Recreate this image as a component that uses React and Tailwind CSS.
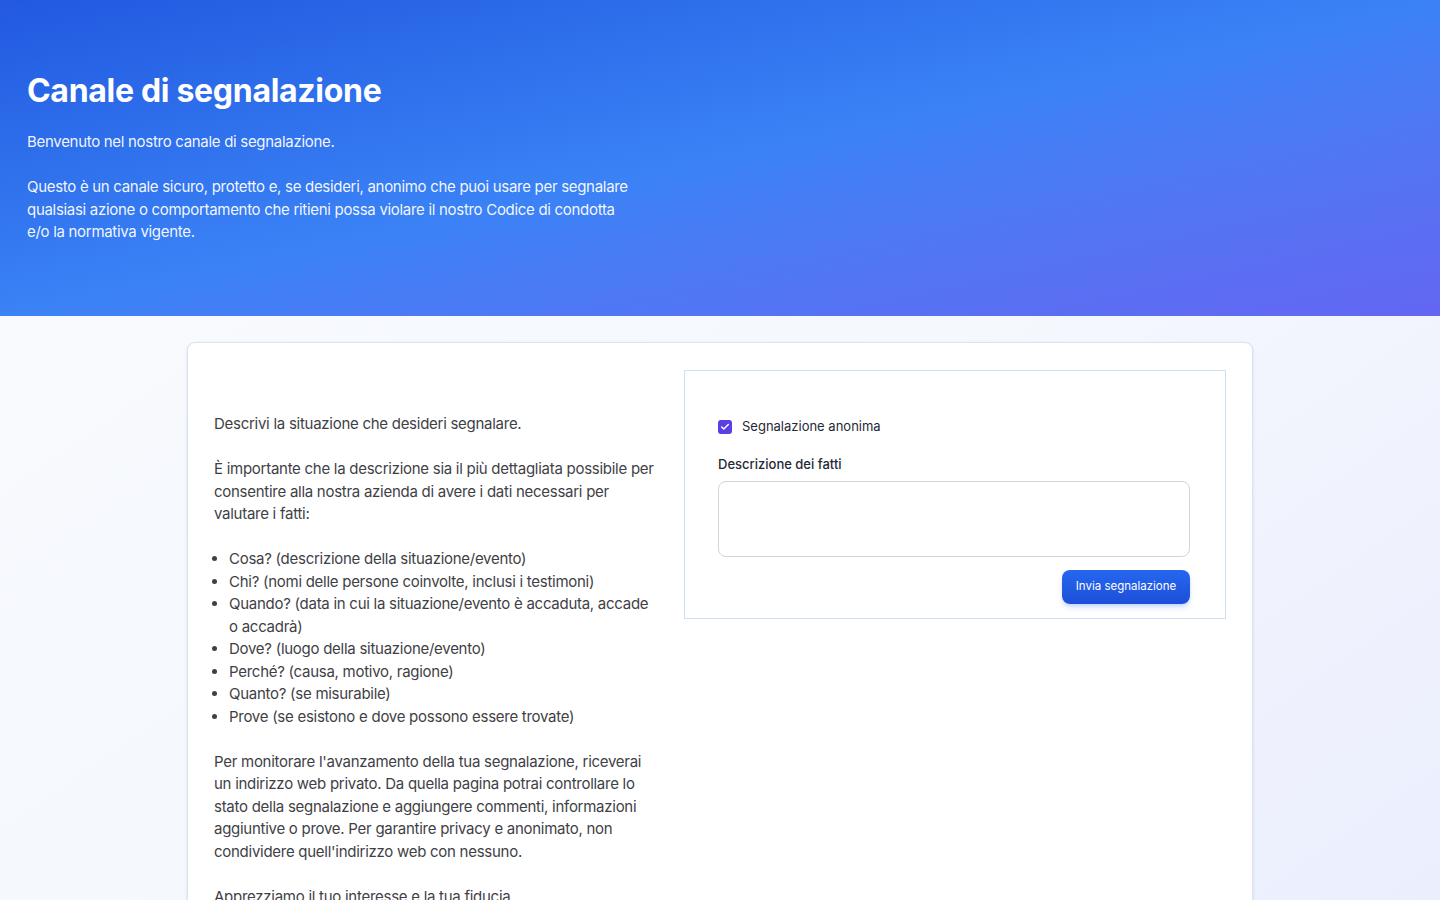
import { Check } from 'lucide-react';

const DOMANDE = [
  'Cosa? (descrizione della situazione/evento)',
  'Chi? (nomi delle persone coinvolte, inclusi i testimoni)',
  'Quando? (data in cui la situazione/evento è accaduta, accade o accadrà)',
  'Dove? (luogo della situazione/evento)',
  'Perché? (causa, motivo, ragione)',
  'Quanto? (se misurabile)',
  'Prove (se esistono e dove possono essere trovate)',
];

export default function App() {
  return (
    <div
      className="min-h-screen bg-gradient-to-br from-[#f9fbfe] via-[#f5f8fd] to-[#eaedfd] text-[#3f3f46]"
      style={{ fontFamily: 'Inter, "Noto Sans", sans-serif' }}
    >
      <header className="h-[316px] bg-gradient-to-br from-[#2259e0] via-[#3b82f6] to-[#6366f1] px-[27px] pt-[71px] text-white">
        <h1 className="text-[32px] font-bold leading-[40px] tracking-[-0.3px]">Canale di segnalazione</h1>
        <div className="mt-[20px] max-w-[612px] text-[15px] leading-[22.5px] tracking-[-0.3px] text-white/95">
          <p>Benvenuto nel nostro canale di segnalazione.</p>
          <p className="mt-[22.5px]">
            Questo è un canale sicuro, protetto e, se desideri, anonimo che puoi usare per segnalare qualsiasi azione o
            comportamento che ritieni possa violare il nostro Codice di condotta e/o la normativa vigente.
          </p>
        </div>
      </header>

      <main className="px-[187px] pt-[26px] pb-16">
        <section className="flex gap-6 rounded-lg border border-[#d6e4f5] bg-white px-[26px] pt-[27px] pb-[27px] shadow-sm">
          <div className="w-[446px] shrink-0 pt-[43px] text-[15px] leading-[22.5px] tracking-[-0.27px] text-[#3f3f46]">
            <p>Descrivi la situazione che desideri segnalare.</p>
            <p className="mt-[22.5px]">
              È importante che la descrizione sia il più dettagliata possibile per consentire alla nostra azienda di
              avere i dati necessari per valutare i fatti:
            </p>
            <ul className="mt-[22.5px] list-disc pl-[15px]">
              {DOMANDE.map((d) => (
                <li key={d}>{d}</li>
              ))}
            </ul>
            <p className="mt-[22.5px]">
              Per monitorare l'avanzamento della tua segnalazione, riceverai un indirizzo web privato. Da quella
              pagina potrai controllare lo stato della segnalazione e aggiungere commenti, informazioni aggiuntive o
              prove. Per garantire privacy e anonimato, non condividere quell'indirizzo web con nessuno.
            </p>
            <p className="mt-[22.5px]">Apprezziamo il tuo interesse e la tua fiducia.</p>
          </div>

          <div className="flex-1 self-start">
            <div className="border border-[#cfe0f3] pl-[33px] pr-[35px] pt-[46px] pb-[14px]">
              <label className="flex items-center gap-[10px] text-[13px] text-[#1f2937]">
                <span className="flex h-[14px] w-[14px] items-center justify-center rounded-[3px] bg-[#5b3ee6]">
                  <Check className="h-[10px] w-[10px] text-white" strokeWidth={3.5} />
                </span>
                Segnalazione anonima
              </label>
              <p className="mt-[18px] text-[13px] font-medium text-[#1f2937]">Descrizione dei fatti</p>
              <div className="mt-[7px] h-[76px] rounded-lg border border-[#d4d4d8] bg-white" />
              <div className="mt-[13px] flex justify-end">
                <button className="h-[34px] w-[128px] rounded-lg bg-gradient-to-b from-[#2667f0] to-[#1d4fd8] text-[11.5px] font-normal text-white shadow-md shadow-blue-600/20">
                  Invia segnalazione
                </button>
              </div>
            </div>
          </div>
        </section>
      </main>
    </div>
  );
}
